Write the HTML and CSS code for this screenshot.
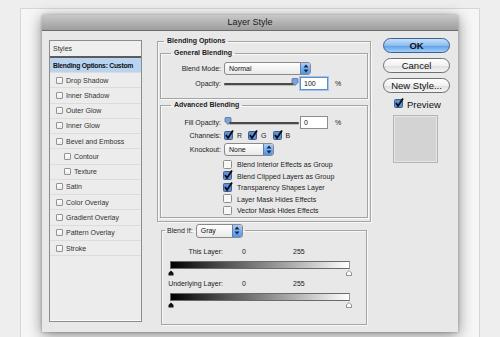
FILE: index.html
```html
<!DOCTYPE html>
<html>
<head>
<meta charset="utf-8">
<title>Layer Style</title>
<link rel="stylesheet" href="styles.css">
</head>
<body>
<div class="frame">
  <div class="dialog">
    <div class="titlebar">Layer Style</div>
    <div class="body">
      <div class="styles">
        <div class="st-head">Styles</div>
        <div class="st-row sel">Blending Options: Custom</div>
        <div class="st-row"><span class="cb"></span>Drop Shadow</div>
        <div class="st-row"><span class="cb"></span>Inner Shadow</div>
        <div class="st-row"><span class="cb"></span>Outer Glow</div>
        <div class="st-row"><span class="cb"></span>Inner Glow</div>
        <div class="st-row"><span class="cb"></span>Bevel and Emboss</div>
        <div class="st-row sub"><span class="cb"></span>Contour</div>
        <div class="st-row sub"><span class="cb"></span>Texture</div>
        <div class="st-row"><span class="cb"></span>Satin</div>
        <div class="st-row"><span class="cb"></span>Color Overlay</div>
        <div class="st-row"><span class="cb"></span>Gradient Overlay</div>
        <div class="st-row"><span class="cb"></span>Pattern Overlay</div>
        <div class="st-row"><span class="cb"></span>Stroke</div>
      </div>

      <div class="main">
        <fieldset class="box outer">
          <legend>Blending Options</legend>
          <fieldset class="box inner gen">
            <legend>General Blending</legend>
            <div class="row">
              <span class="lbl">Blend Mode:</span>
              <div class="select w-normal"><span class="sel-text">Normal</span><span class="step"><svg width="6" height="9" viewBox="0 0 6 9"><path d="M3 0.5 L5.5 3.5 H0.5 Z M3 8.5 L5.5 5.5 H0.5 Z" fill="#10224a"/></svg></span></div>
            </div>
            <div class="row">
              <span class="lbl">Opacity:</span>
              <div class="slider">
                <span class="track"></span>
                <svg class="thumb thumb-end" width="8" height="8" viewBox="0 0 8 8"><path d="M1 1.5 Q1 0.5 2 0.5 H6 Q7 0.5 7 1.5 V4.5 L4 7.5 L1 4.5 Z" fill="#7fa3d8" stroke="#4d6c9c" stroke-width="0.8"/></svg>
              </div>
              <div class="input focus">100</div>
              <span class="pct">%</span>
            </div>
          </fieldset>

          <fieldset class="box inner adv">
            <legend>Advanced Blending</legend>
            <div class="row">
              <span class="lbl">Fill Opacity:</span>
              <div class="slider">
                <svg class="thumb thumb-start" width="8" height="8" viewBox="0 0 8 8"><path d="M1 1.5 Q1 0.5 2 0.5 H6 Q7 0.5 7 1.5 V4.5 L4 7.5 L1 4.5 Z" fill="#7fa3d8" stroke="#4d6c9c" stroke-width="0.8"/></svg>
                <span class="track"></span>
              </div>
              <div class="input">0</div>
              <span class="pct">%</span>
            </div>
            <div class="row channels">
              <span class="lbl">Channels:</span>
              <span class="chk on"><svg width="10" height="10" viewBox="0 0 10 10"><rect x="0.5" y="1.5" width="8" height="8" rx="1" fill="#5f8fd4" stroke="#3f5f94"/><path d="M2 5 L4 8 L9 0.5" fill="none" stroke="#0a0a0a" stroke-width="1.8"/></svg></span><span class="ch">R</span>
              <span class="chk on"><svg width="10" height="10" viewBox="0 0 10 10"><rect x="0.5" y="1.5" width="8" height="8" rx="1" fill="#5f8fd4" stroke="#3f5f94"/><path d="M2 5 L4 8 L9 0.5" fill="none" stroke="#0a0a0a" stroke-width="1.8"/></svg></span><span class="ch">G</span>
              <span class="chk on"><svg width="10" height="10" viewBox="0 0 10 10"><rect x="0.5" y="1.5" width="8" height="8" rx="1" fill="#5f8fd4" stroke="#3f5f94"/><path d="M2 5 L4 8 L9 0.5" fill="none" stroke="#0a0a0a" stroke-width="1.8"/></svg></span><span class="ch">B</span>
            </div>
            <div class="row">
              <span class="lbl">Knockout:</span>
              <div class="select w-none"><span class="sel-text">None</span><span class="step"><svg width="6" height="9" viewBox="0 0 6 9"><path d="M3 0.5 L5.5 3.5 H0.5 Z M3 8.5 L5.5 5.5 H0.5 Z" fill="#10224a"/></svg></span></div>
            </div>
            <div class="checks">
              <div class="crow"><span class="chk"><svg width="10" height="10" viewBox="0 0 10 10"><rect x="0.5" y="1.5" width="8" height="8" rx="1" fill="#f7f7f7" stroke="#8d8d8d"/></svg></span>Blend Interior Effects as Group</div>
              <div class="crow"><span class="chk on"><svg width="10" height="10" viewBox="0 0 10 10"><rect x="0.5" y="1.5" width="8" height="8" rx="1" fill="#5f8fd4" stroke="#3f5f94"/><path d="M2 5 L4 8 L9 0.5" fill="none" stroke="#0a0a0a" stroke-width="1.8"/></svg></span>Blend Clipped Layers as Group</div>
              <div class="crow"><span class="chk on"><svg width="10" height="10" viewBox="0 0 10 10"><rect x="0.5" y="1.5" width="8" height="8" rx="1" fill="#5f8fd4" stroke="#3f5f94"/><path d="M2 5 L4 8 L9 0.5" fill="none" stroke="#0a0a0a" stroke-width="1.8"/></svg></span>Transparency Shapes Layer</div>
              <div class="crow"><span class="chk"><svg width="10" height="10" viewBox="0 0 10 10"><rect x="0.5" y="1.5" width="8" height="8" rx="1" fill="#f7f7f7" stroke="#8d8d8d"/></svg></span>Layer Mask Hides Effects</div>
              <div class="crow"><span class="chk"><svg width="10" height="10" viewBox="0 0 10 10"><rect x="0.5" y="1.5" width="8" height="8" rx="1" fill="#f7f7f7" stroke="#8d8d8d"/></svg></span>Vector Mask Hides Effects</div>
            </div>
          </fieldset>
        </fieldset>

        <fieldset class="box blendif">
          <legend><span class="bi-lbl">Blend If:</span><span class="select w-gray"><span class="sel-text">Gray</span><span class="step"><svg width="6" height="9" viewBox="0 0 6 9"><path d="M3 0.5 L5.5 3.5 H0.5 Z M3 8.5 L5.5 5.5 H0.5 Z" fill="#10224a"/></svg></span></span></legend>
          <div class="lrow"><span class="lbl2">This Layer:</span><span class="v0">0</span><span class="v255">255</span></div>
          <div class="grad"></div>
          <div class="tris">
            <svg width="6" height="6" viewBox="0 0 6 6"><path d="M3 0.5 L5.5 3 V5.5 H0.5 V3 Z" fill="#111"/></svg>
            <svg width="6" height="6" viewBox="0 0 6 6"><path d="M3 0.5 L5.5 3 V5.5 H0.5 V3 Z" fill="#fff" stroke="#777" stroke-width="0.8"/></svg>
          </div>
          <div class="lrow"><span class="lbl2">Underlying Layer:</span><span class="v0">0</span><span class="v255">255</span></div>
          <div class="grad"></div>
          <div class="tris">
            <svg width="6" height="6" viewBox="0 0 6 6"><path d="M3 0.5 L5.5 3 V5.5 H0.5 V3 Z" fill="#111"/></svg>
            <svg width="6" height="6" viewBox="0 0 6 6"><path d="M3 0.5 L5.5 3 V5.5 H0.5 V3 Z" fill="#fff" stroke="#777" stroke-width="0.8"/></svg>
          </div>
        </fieldset>
      </div>

      <div class="buttons">
        <div class="btn ok">OK</div>
        <div class="btn">Cancel</div>
        <div class="btn">New Style...</div>
        <div class="preview"><span class="chk on"><svg width="10" height="10" viewBox="0 0 10 10"><rect x="0.5" y="1.5" width="8" height="8" rx="1" fill="#5f8fd4" stroke="#3f5f94"/><path d="M2 5 L4 8 L9 0.5" fill="none" stroke="#0a0a0a" stroke-width="1.8"/></svg></span>Preview</div>
        <div class="swatch"></div>
      </div>
    </div>
  </div>
</div>
</body>
</html>
```

FILE: styles.css
```css
* { box-sizing: border-box; }

html, body {
  margin: 0;
  padding: 0;
  height: 100%;
  overflow: hidden;
}

body {
  background: #eeeeee;
  font-family: "Liberation Sans", Arial, sans-serif;
  font-size: 7px;
  color: #222;
}

.frame {
  margin: 8px 0 0 20px;
  width: 460px;
  height: 340px;
  border: 1px solid #d6d6d6;
  border-bottom: none;
  background: #f6f6f6;
  padding: 6px 0 0 21px;
}

.dialog {
  width: 416px;
  height: 317px;
  background: #e8e8e8;
  box-shadow: 0 3px 14px rgba(0, 0, 0, 0.45), 0 0 3px rgba(0, 0, 0, 0.25);
  display: flex;
  flex-direction: column;
}

.titlebar {
  height: 16px;
  line-height: 15px;
  text-align: center;
  font-size: 9px;
  color: #1a1a1a;
  background: linear-gradient(#c8c8c8, #9e9e9e);
  border-bottom: 1px solid #6c6c6c;
}

.body {
  flex: 1;
  display: flex;
  align-items: flex-start;
  padding: 6px 0 0 7px;
}

/* ---------- Styles list ---------- */
.styles {
  width: 93px;
  height: 282px;
  margin-top: 3px;
  border: 1px solid #8c8c8c;
  background: #ececec;
  box-shadow: inset 0 -1px 0 #fafafa;
}

.st-head {
  height: 17px;
  line-height: 15px;
  padding-left: 3px;
  border-bottom: 2px solid #5c5c5c;
  background: #efefef;
  color: #333;
}

.st-row {
  height: 15.27px;
  display: flex;
  align-items: center;
  padding-left: 6px;
  border-bottom: 1px solid #dcdcdc;
  color: #333;
  white-space: nowrap;
}

.st-row.sel {
  height: 15px;
  background: #b8d4f1;
  font-weight: bold;
  font-size: 6.8px;
  letter-spacing: -0.25px;
  padding-left: 3px;
  color: #111;
}

.st-row.sub { padding-left: 14px; }

.cb {
  width: 7px;
  height: 7px;
  margin-right: 3px;
  border: 1px solid #939393;
  border-radius: 1px;
  background: linear-gradient(#ffffff, #ececec);
  flex: none;
}

/* ---------- Main column ---------- */
.main {
  width: 214px;
  margin-left: 15px;
}

fieldset.box {
  margin: 0;
  border: 1px solid #a4a4a4;
  box-shadow: 1px 1px 0 #f8f8f8, inset 1px 1px 0 #f8f8f8;
  min-width: 0;
}

fieldset.box > legend {
  font-weight: bold;
  line-height: 8px;
  padding: 0 3px;
  color: #222;
}

.outer {
  padding: 4px 2px 3px 2px;
}

.outer > legend { margin-left: 4px; }

.inner { padding: 0; }

.inner > legend { margin-left: 10px; }

.gen { padding: 5px 0 6px 0; }

.adv {
  margin-top: 2px !important;
  padding: 7px 0 0 0;
}

.row {
  display: flex;
  align-items: center;
  height: 13px;
  margin-bottom: 2px;
  white-space: nowrap;
}

.adv .row { margin-bottom: 1px; }
.adv .row.channels { height: 11px; margin-bottom: 2px; }

.lbl {
  width: 60px;
  text-align: right;
  margin-right: 3px;
  flex: none;
}

.select {
  height: 13px;
  display: flex;
  align-items: center;
  border: 1px solid #8a8a8a;
  border-radius: 3px;
  background: linear-gradient(#ffffff, #e9e9e9);
  padding-left: 4px;
  overflow: hidden;
}

.sel-text { flex: 1; font-weight: normal; color: #111; }

.step {
  width: 10px;
  align-self: stretch;
  display: flex;
  align-items: center;
  justify-content: center;
  background: linear-gradient(#a9cdf5, #4f94e3);
  border-left: 1px solid #5b7fb0;
}

.w-normal { width: 87px; }
.w-none { width: 50px; }
.w-gray { width: 47px; height: 14px; }

.slider {
  width: 75px;
  display: flex;
  align-items: center;
}

.track {
  flex: 1;
  height: 2px;
  border-radius: 1px;
  background: #4a4a4a;
  box-shadow: 0 1px 0 #bdbdbd;
}

.thumb { flex: none; }
.thumb-end { margin-left: -3px; margin-top: -3px; }
.thumb-start { margin-right: -3px; margin-top: -3px; }

.input {
  width: 28px;
  height: 13px;
  margin-left: 1px;
  line-height: 11px;
  padding-left: 3px;
  background: #fff;
  border: 1px solid #8d8d8d;
  color: #111;
}

.input.focus {
  border-color: #5d8fd0;
  box-shadow: 0 0 0 1px #9fc3ee;
}

.pct { margin-left: 7px; }

.chk {
  width: 10px;
  height: 10px;
  display: inline-flex;
  flex: none;
}

.chk svg { display: block; }

.row .chk { margin-right: 3px; margin-top: -2px; }
.ch { margin-right: 6px; }

.checks {
  padding-left: 62px;
  margin-top: 3px;
}

.crow {
  height: 11.5px;
  display: flex;
  align-items: center;
  white-space: nowrap;
}

.crow .chk { margin-right: 4px; margin-top: -2px; }

/* ---------- Blend If ---------- */
.blendif {
  width: 206px;
  margin-top: 2px !important;
  margin-left: 4px !important;
  padding: 10px 0 16px 8px;
}

.blendif > legend {
  display: flex;
  align-items: center;
  margin-left: -5px;
  line-height: 14px;
  font-weight: normal !important;
  padding: 0 2px !important;
}

.bi-lbl { margin-right: 3px; }

.lrow {
  display: flex;
  height: 8px;
  line-height: 8px;
  white-space: nowrap;
}

.lbl2 {
  width: 56px;
  text-align: right;
  margin-left: -3px;
  flex: none;
}

.v0 { margin-left: 19px; width: 51px; }

.grad {
  width: 180px;
  height: 8px;
  margin-top: 5px;
  border: 1px solid #6a6a6a;
  border-right-color: #9a9a9a;
  background: linear-gradient(to right, #000 0%, #444 25%, #999 60%, #fff 100%);
}

.tris {
  width: 184px;
  margin-left: -2px;
  margin-top: 1px;
  height: 6px;
  display: flex;
  justify-content: space-between;
}

.tris svg { display: block; }

.tris + .lrow { margin-top: 4px; }

/* ---------- Buttons ---------- */
.buttons {
  width: 67px;
  margin-left: 12px;
  padding-top: 1px;
  display: flex;
  flex-direction: column;
  align-items: stretch;
}

.btn {
  height: 15px;
  line-height: 13px;
  margin-bottom: 5px;
  text-align: center;
  font-size: 9.5px;
  color: #111;
  border: 1px solid #6f6f6f;
  border-radius: 8px;
  background: linear-gradient(#ffffff 0%, #f1f1f1 50%, #dedede 51%, #f4f4f4 100%);
}

.btn.ok {
  font-weight: bold;
  border-color: #3e5f93;
  background: linear-gradient(#c6e0fb 0%, #8dbdef 50%, #5c9ee6 51%, #9fd0fb 100%);
}

.preview {
  display: flex;
  align-items: center;
  padding-left: 11px;
  height: 12px;
  font-size: 9.5px;
  color: #111;
}

.preview .chk { margin-right: 3px; margin-top: -2px; }

.swatch {
  width: 45px;
  height: 48px;
  margin: 5px 0 0 10px;
  background: #d3d3d3;
  border: 1px solid #b4b4b4;
  box-shadow: inset 0 0 0 1px #e6e6e6;
}
```
